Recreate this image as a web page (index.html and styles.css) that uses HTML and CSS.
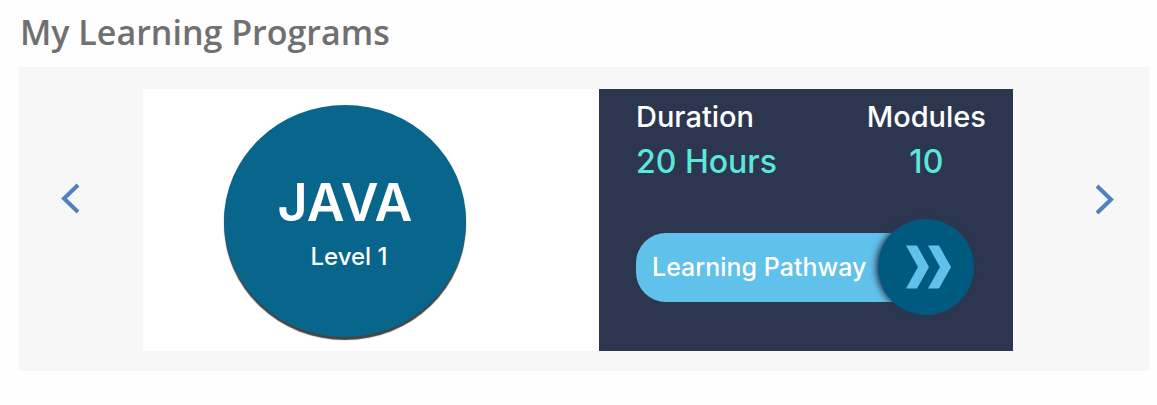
FILE: index.html
```html
<!DOCTYPE html>
<html lang="en">
<head>
<meta charset="utf-8">
<meta name="viewport" content="width=device-width, initial-scale=1">
<title>My Learning Programs</title>
<link rel="stylesheet" href="styles.css">
</head>
<body>
<main class="page">
  <h1 class="title">My Learning Programs</h1>
  <section class="carousel" aria-label="Learning programs">
    <button class="arrow" type="button" aria-label="Previous program">
      <svg width="20" height="32" viewBox="0 0 20 32"><path d="M17 2 3 15.500 17 29"/></svg>
    </button>
    <article class="card">
      <div class="course">
        <div class="badge">
          <h2 class="course-name">JAVA</h2>
          <p class="course-level">Level 1</p>
        </div>
      </div>
      <div class="details">
        <dl class="stats">
          <div class="stat">
            <dt>Duration</dt>
            <dd>20 Hours</dd>
          </div>
          <div class="stat stat-centered">
            <dt>Modules</dt>
            <dd>10</dd>
          </div>
        </dl>
        <button class="pathway" type="button">
          <span class="pathway-label">Learning Pathway</span>
          <span class="pathway-icon">
            <svg width="48" height="46" viewBox="0 0 48 46"><path d="M2 1.500H13L25 23 13 44.500H2L14 23ZM24 1.500H35L47 23 35 44.500H24L36 23Z"/></svg>
          </span>
        </button>
      </div>
    </article>
    <button class="arrow" type="button" aria-label="Next program">
      <svg width="20" height="32" viewBox="0 0 20 32"><path d="M3 3 17 16.500 3 30"/></svg>
    </button>
  </section>
</main>
</body>
</html>
```
FILE: styles.css
```css
* {
  box-sizing: border-box;
}

body {
  margin: 0;
  background: #fefefe;
  font-family: Inter, "Liberation Sans", sans-serif;
}

button {
  border: 0;
  padding: 0;
  background: none;
  font: inherit;
  cursor: pointer;
}

.page {
  padding: 8px 8px 32px 19px;
}

.title {
  margin: 0 0 11px;
  padding-left: 1px;
  font: 600 34px/48px "Open Sans", "Noto Sans", sans-serif;
  color: #707070;
}

.carousel {
  display: flex;
  align-items: center;
  padding: 22px 35px 20px 42px;
  background: #f7f7f7;
}

.arrow {
  display: grid;
  flex: none;
  padding-bottom: 42px;
}

.arrow path {
  fill: none;
  stroke: #4f81bd;
  stroke-width: 4;
}

.card {
  display: grid;
  grid-template-columns: 456fr 414fr;
  flex: 1;
  min-height: 262px;
  margin: 0 81px 0 62px;
  background: #fff;
}

.course {
  display: grid;
  place-items: center;
  padding: 16px 52px 14px 0;
}

.badge {
  display: flex;
  flex-direction: column;
  align-items: center;
  width: 242px;
  height: 232px;
  padding-top: 66px;
  border-radius: 50%;
  background: #08658c;
  box-shadow: 0 3px 1px #444;
  color: #fff;
}

.course-name {
  margin: 0;
  font-size: 52px;
  font-weight: 600;
  line-height: 64px;
}

.course-level {
  margin: 4px 0 0;
  padding-left: 8px;
  font-size: 24px;
  font-weight: 500;
  line-height: 36px;
}

.details {
  display: flex;
  flex-direction: column;
  align-items: flex-start;
  gap: 36px;
  padding: 8px 27px 36px 37px;
  background: #2d364f;
}

.stats {
  display: flex;
  justify-content: space-between;
  align-self: stretch;
  margin: 0;
}

.stat-centered {
  text-align: center;
}

.stat dt {
  color: #fff;
  font-size: 29px;
  font-weight: 500;
  line-height: 40px;
}

.stat dd {
  margin: 4px 0 0;
  color: #5be7dc;
  font-size: 32px;
  font-weight: 500;
  line-height: 42px;
}

.pathway {
  display: flex;
  align-items: center;
}

.pathway-label {
  padding: 0 60px 0 16px;
  border-radius: 30px 0 0 30px;
  background: #60c1ea;
  color: #fff;
  font-size: 25px;
  font-weight: 500;
  line-height: 69px;
  white-space: nowrap;
}

.pathway-icon {
  display: grid;
  flex: none;
  place-items: center;
  width: 96px;
  height: 96px;
  margin-left: -48px;
  padding-left: 4px;
  border-radius: 50%;
  background: #005a80;
  box-shadow: -2px 0 6px #2d364f;
}

.pathway-icon path {
  fill: #60c1ea;
}
```
